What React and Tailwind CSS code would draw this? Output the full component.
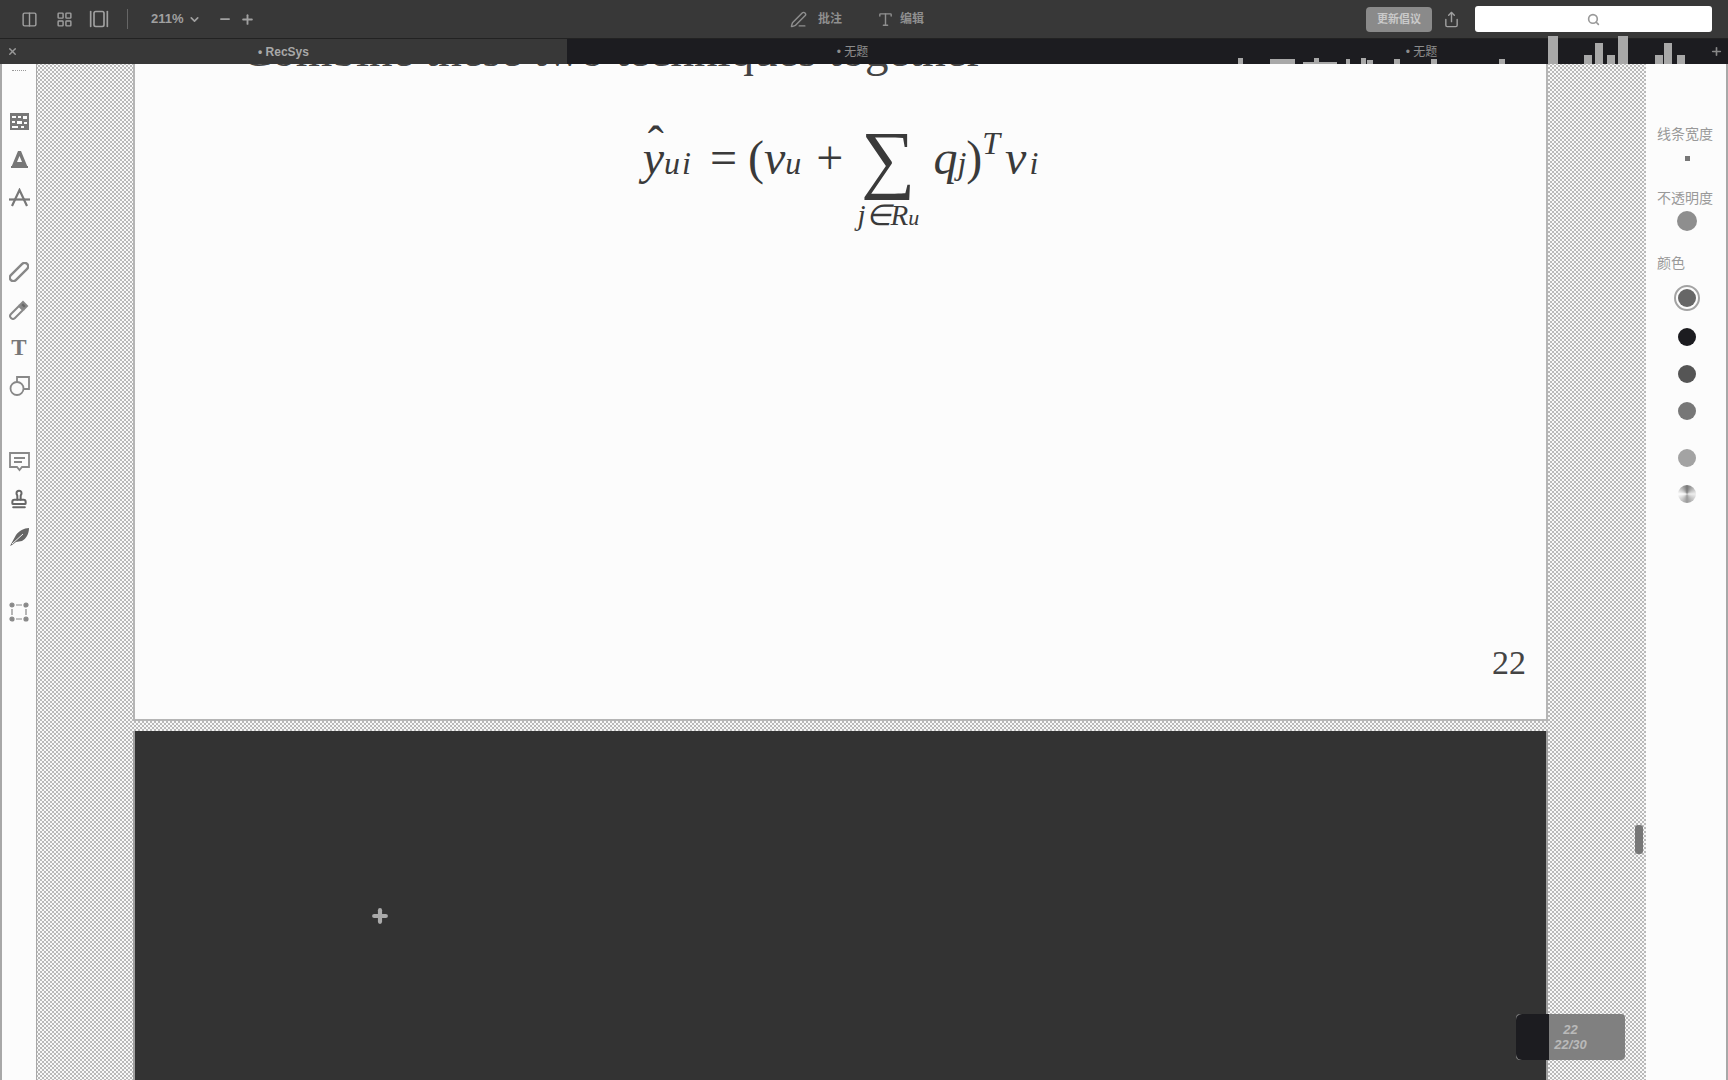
import React from 'react';
import { Columns2, LayoutGrid, GalleryHorizontal, ChevronDown, Minus, Plus, X, PenLine, Share, Search, Type, Stamp } from 'lucide-react';

const dots = 'bg-[#f8f8f8] bg-[radial-gradient(#b4b4b4_0.7px,transparent_0.8px),radial-gradient(#b4b4b4_0.7px,transparent_0.8px)] bg-[length:4px_4px] bg-[position:0_0,2px_2px]';
const serif = { fontFamily: '"Liberation Serif", serif' };

// left rail drawings, these don't exist in the icon packs in this shape
const TextBoxIcon = () => (
  <svg width="19" height="17" viewBox="0 0 19 17" fill="#777">
    <path d="M0 0h19v17H0zM2 3v2h4V3zm6 0v2h3V3zm5 0v3h4V3zM2 8v2h3V8zm5 0v3h5V8zm7 1v2h3V9zM2 13v2h6v-2zm9 0v2h3v-2z" fillRule="evenodd" />
  </svg>
);
const TriangleAIcon = () => (
  <svg width="19" height="19" viewBox="0 0 19 19" fill="#777">
    <path d="M8 1h3l7 17H1zM9.5 6 7 12h5z" fillRule="evenodd" />
    <rect x="1" y="16" width="17" height="2" />
  </svg>
);
const StrikeAIcon = () => (
  <svg width="21" height="19" viewBox="0 0 21 19" fill="none" stroke="#777" strokeWidth="2.2">
    <path d="M3 18 10.5 2 18 18" />
    <path d="M0 11.5h21" />
  </svg>
);
const ClipIcon = () => (
  <svg width="20" height="20" viewBox="0 0 20 20" fill="none" stroke="#888" strokeWidth="2.4">
    <rect x="-1.5" y="6.5" width="23" height="7" rx="3.5" transform="rotate(-45 10 10)" />
  </svg>
);
const PinIcon = () => (
  <svg width="20" height="20" viewBox="0 0 20 20" fill="none" stroke="#888" strokeWidth="2">
    <path d="M2 14 10 6l4 4-8 8a2.8 2.8 0 0 1-4-4Z" />
    <path d="M11 5l3-3 4 4-3 3z" fill="#666" />
  </svg>
);
const ShapesIcon = () => (
  <svg width="21" height="20" viewBox="0 0 21 20" fill="none" stroke="#888" strokeWidth="1.8">
    <circle cx="8" cy="12.5" r="6.5" />
    <path d="M8 6V1h12v12h-5.5" />
  </svg>
);
const BubbleIcon = () => (
  <svg width="21" height="21" viewBox="0 0 21 21" fill="none" stroke="#888" strokeWidth="1.8">
    <path d="M1 2h19v14h-7l-2.5 3L8 16H1z" />
    <path d="M5 7h11M5 11h8" />
  </svg>
);
const FeatherIcon = () => (
  <svg width="21" height="20" viewBox="0 0 21 20" fill="#666">
    <path d="M1 19 7 8c3-4 8-7 13-7 0 6-3 11-7 13l-6 1-4 3z" />
    <path d="M3 17 14 7" stroke="#fff" strokeWidth="0.9" />
  </svg>
);
const SelectionIcon = () => (
  <svg width="20" height="20" viewBox="0 0 20 20" fill="#888" stroke="#888" strokeWidth="1.2">
    <circle cx="3" cy="3" r="2" />
    <circle cx="17" cy="3" r="2" />
    <circle cx="3" cy="17" r="2" />
    <circle cx="17" cy="17" r="2" />
    <path d="M7 3h6M7 17h6M3 7v6M17 7v6" fill="none" />
  </svg>
);

const Tool = ({ children, className = '' }) => (
  <div className={`flex h-[38px] items-center justify-center ${className}`}>{children}</div>
);

const Swatch = ({ className, mt }) => (
  <div className={`mx-auto h-[18px] w-[18px] rounded-full ${mt} ${className}`} />
);

const TopBar = () => (
  <div className="relative flex h-[38px] shrink-0 items-center justify-between bg-[#383838] pl-[21px] pr-[16px] text-[#a0a0a0]">
    <div className="flex items-center">
      <Columns2 size={17} />
      <LayoutGrid size={17} className="ml-[18px]" />
      <GalleryHorizontal size={20} className="ml-[16px]" />
      <div className="ml-[18px] h-[20px] w-px bg-[#666]" />
      <span className="ml-[23px] text-[13px] font-bold">211%</span>
      <ChevronDown size={13} strokeWidth={3} className="ml-[4px]" />
      <Minus size={14} strokeWidth={3} className="ml-[17px]" />
      <Plus size={15} strokeWidth={3} className="ml-[8px]" />
    </div>
    <div className="absolute left-[790px] flex items-center text-[12px] font-bold text-[#8f8f8f]">
      <PenLine size={17} />
      <span className="ml-[11px]">批注</span>
      <Type size={17} className="ml-[35px]" />
      <span className="ml-[6px]">编辑</span>
    </div>
    <div className="flex items-center">
      <div className="flex h-[25px] w-[66px] items-center justify-center rounded-[4px] bg-[#8a8a8a] text-[11px] font-bold text-[#c9c9c9]">更新倡议</div>
      <Share size={17} className="ml-[11px]" />
      <div className="ml-[15px] flex h-[26px] w-[237px] items-center justify-center rounded-[3px] bg-white text-[#999]">
        <Search size={13} strokeWidth={3} />
      </div>
    </div>
  </div>
);

const Tab = ({ label, active }) => (
  <div className={`flex h-full items-center justify-center text-[12px] ${active ? 'w-[567px] bg-[#383838] font-bold text-[#a8a8a8]' : 'w-[569px] pl-[2px] text-[#8c8c8c]'}`}>
    • {label}
  </div>
);

// bottoms of the neighbouring tab's slide text showing through: [x, width, height]
const bleed = [
  [1238, 5, 6], [1270, 25, 5], [1303, 34, 2], [1314, 5, 6], [1346, 4, 5], [1361, 5, 6], [1367, 6, 4],
  [1394, 6, 5], [1431, 6, 5], [1499, 6, 5], [1548, 10, 28], [1584, 8, 9], [1595, 8, 21],
  [1607, 8, 9], [1618, 10, 28], [1655, 8, 9], [1664, 8, 21], [1677, 8, 9],
];

const TabBar = () => (
  <div className="relative flex h-[26px] shrink-0 items-stretch border-t border-[#222] bg-[#1c1c20]">
    <Tab label="RecSys" active />
    <Tab label="无题" />
    <Tab label="无题" />
    <div className="flex flex-1 items-center justify-center text-[#888]"><Plus size={13} strokeWidth={3} /></div>
    <X size={11} strokeWidth={3} className="absolute left-[7px] top-[7px] text-[#999]" />
    {bleed.map(([x, w, h]) => (
      <div key={x} className="absolute bottom-0 bg-[#a8a8a8]" style={{ left: x, width: w, height: h }} />
    ))}
  </div>
);

const LeftTools = () => (
  <div className="flex w-[37px] shrink-0 flex-col items-stretch border-l-2 border-r border-[#a8a8a8] bg-[#fcfcfc]">
    <div className="mx-auto mt-[6px] h-[3px] w-[14px] border-t border-dotted border-[#999]" />
    <Tool className="mt-[29px]"><TextBoxIcon /></Tool>
    <Tool><TriangleAIcon /></Tool>
    <Tool><StrikeAIcon /></Tool>
    <Tool className="mt-[37px]"><ClipIcon /></Tool>
    <Tool><PinIcon /></Tool>
    <Tool><span style={serif} className="text-[23px] font-bold text-[#777]">T</span></Tool>
    <Tool><ShapesIcon /></Tool>
    <Tool className="mt-[37px]"><BubbleIcon /></Tool>
    <Tool><Stamp size={20} strokeWidth={2.4} className="text-[#666]" /></Tool>
    <Tool><FeatherIcon /></Tool>
    <Tool className="mt-[37px]"><SelectionIcon /></Tool>
  </div>
);

const Equation = () => (
  <div style={serif} className="mt-[56px] flex items-start justify-center italic text-[#3a3a3a]">
    <div className="flex items-baseline text-[48px] leading-[56px]">
      <span className="relative">y<span className="absolute left-[5px] top-[-14px] not-italic">ˆ</span></span>
      <span className="text-[32px] tracking-[2px]">ui</span>
      <span className="ml-[17px] not-italic">=</span>
      <span className="ml-[11px] not-italic">(</span>
      <span>v</span>
      <span className="text-[32px]">u</span>
      <span className="ml-[15px] not-italic">+</span>
    </div>
    <div className="ml-[13px] flex w-[64px] flex-col items-center">
      <span className="-mt-[10px] text-[76px] not-italic leading-[76px]">∑</span>
      <span className="mt-[3px] whitespace-nowrap text-[29px] leading-[32px]">j∈R<span className="text-[22px]">u</span></span>
    </div>
    <div className="ml-[13px] flex items-baseline text-[48px] leading-[56px]">
      <span>q</span>
      <span className="text-[32px]">j</span>
      <span className="not-italic">)</span>
      <span className="relative top-[-20px] text-[32px]">T</span>
      <span className="ml-[5px]">v</span>
      <span className="ml-[3px] text-[32px]">i</span>
    </div>
  </div>
);

const Canvas = () => (
  <div className={`relative flex-1 overflow-hidden ${dots}`}>
    <div className="ml-[96px] mr-[98px] flex flex-col">
      <div className="relative h-[657px] border-x-2 border-b-2 border-[#b5b5b5] bg-[#fcfcfc]">
        <div style={serif} className="ml-[106px] -mt-[38px] h-[48px] whitespace-nowrap text-[47px] leading-[48px] text-[#444]">Combine these two techniques together</div>
        <Equation />
        <span style={serif} className="absolute bottom-[39px] right-[20px] text-[34px] leading-none text-[#444]">22</span>
      </div>
      <div className="relative mt-[10px] h-[400px] border-x-2 border-[#a0a0a0] bg-[#333333]">
        <Plus size={20} strokeWidth={5} className="absolute left-[235px] top-[175px] text-[#aaa]" />
      </div>
    </div>
    {/* scroll thumb */}
    <div className="absolute left-[1598px] top-[761px] h-[29px] w-[8px] rounded-[3px] bg-[#777]" />
    {/* page number badge */}
    <div className="absolute left-[1479px] top-[950px] flex h-[46px] w-[109px] flex-col items-center justify-center rounded-[4px] bg-[#808080] text-[13px] font-bold italic leading-[15px] text-[#b9b9b9]">
      <div className="absolute inset-y-0 left-0 w-[33px] rounded-l-[6px] bg-[#1c1c20]" />
      <span className="relative">22</span>
      <span className="relative">22/30</span>
    </div>
  </div>
);

const RightPanel = () => (
  <div className="flex w-[82px] shrink-0 flex-col border-r-2 border-[#a8a8a8] bg-[#fcfcfc] pl-[11px] pr-[9px] text-[14px] text-[#999]">
    <div className="mt-[62px] whitespace-nowrap leading-[16px]">线条宽度</div>
    <div className="mx-auto mt-[14px] h-[5px] w-[5px] bg-[#777]" />
    <div className="mt-[29px] whitespace-nowrap leading-[16px]">不透明度</div>
    <div className="mx-auto mt-[5px] h-[20px] w-[20px] rounded-full bg-[#8e8e8e]" />
    <div className="mt-[24px] leading-[16px]">颜色</div>
    <div className="mx-auto mt-[14px] flex h-[26px] w-[26px] items-center justify-center rounded-full border-2 border-[#a3a3a3]">
      <div className="h-[18px] w-[18px] rounded-full bg-[#666]" />
    </div>
    <Swatch className="bg-[#1c1c20]" mt="mt-[17px]" />
    <Swatch className="bg-[#555]" mt="mt-[19px]" />
    <Swatch className="bg-[#777]" mt="mt-[19px]" />
    <Swatch className="bg-[#a3a3a3]" mt="mt-[29px]" />
    <Swatch className="bg-[conic-gradient(#777,#eee,#999,#fff,#777)]" mt="mt-[18px]" />
  </div>
);

export default function App() {
  return (
    <div className="flex h-[1080px] w-[1728px] flex-col overflow-hidden" style={{ fontFamily: '"Liberation Sans", "Noto Sans CJK SC", sans-serif' }}>
      <div className="relative z-10 flex shrink-0 flex-col">
        <TopBar />
        <TabBar />
      </div>
      <div className="flex min-h-0 flex-1">
        <LeftTools />
        <Canvas />
        <RightPanel />
      </div>
    </div>
  );
}
